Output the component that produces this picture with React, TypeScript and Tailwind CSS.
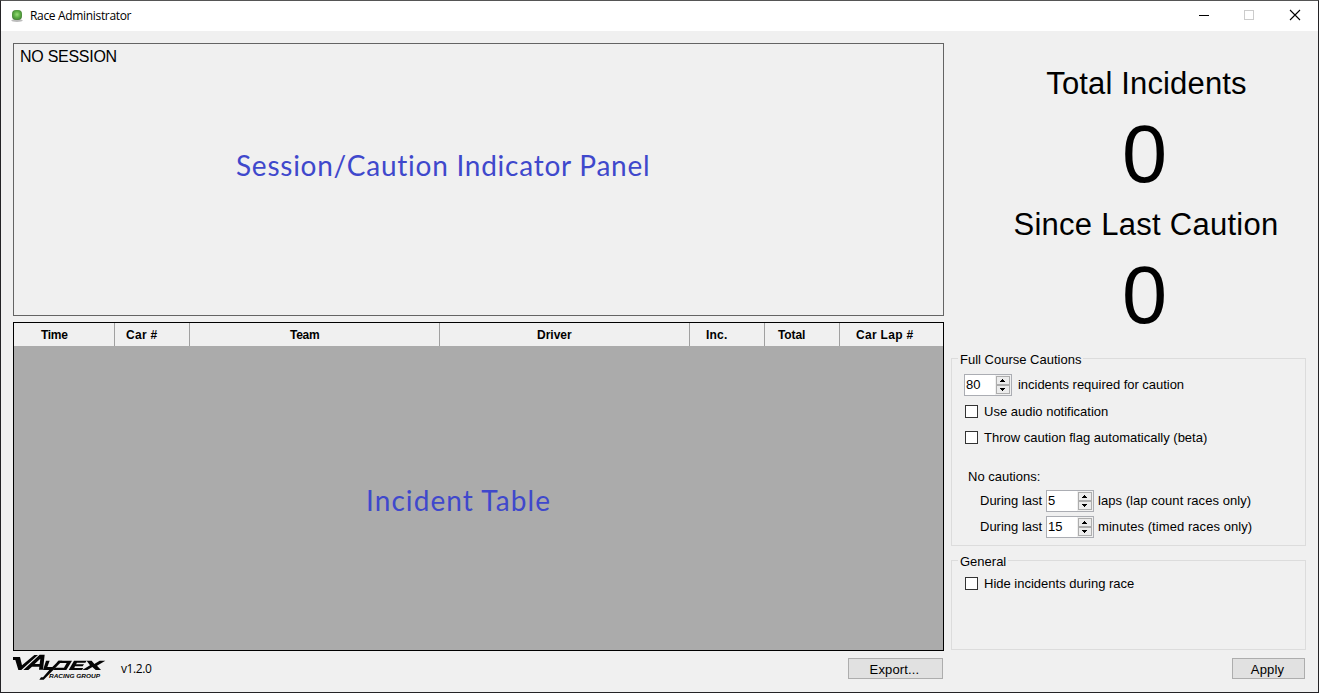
import React from "react";

const columns = [
  { name: "Time", cell: "w-[101px] pl-[27px]", text: "tracking-[-0.3px]" },
  { name: "Car #", cell: "w-[75px] pl-[11px]", text: "tracking-[0.3px]" },
  { name: "Team", cell: "w-[250px] pl-[100px]", text: "tracking-[-0.3px]" },
  { name: "Driver", cell: "w-[250px] pl-[97px]", text: "tracking-[0px]" },
  { name: "Inc.", cell: "w-[75px] pl-[16px]", text: "tracking-[0.2px]" },
  { name: "Total", cell: "w-[75px] pl-[13px]", text: "tracking-[-0.1px]" },
  { name: "Car Lap #", cell: "w-[103px] pl-[16px]", text: "tracking-[0.32px]" },
];

function Spinner({ value }: { value: string }) {
  return (
    <div className="flex h-[22px] w-[48px] shrink-0 border border-[#abadb3] bg-white">
      <span className="w-[30px] pl-[1px] text-[13px] leading-[20px]">{value}</span>
      <svg width="16" height="20" viewBox="0 0 16 20" shapeRendering="crispEdges">
        <path d="M0 0h16v20H0z" fill="#f0f0f0" />
        <path d="M1.500 1.500h13v8h-13zM1.500 10.500h13v8h-13z" fill="#ececec" stroke="#adadad" />
        <path d="M7 4h1v1h1v1h1v1H5V6h1V5h1zM5 13h5v1h-1v1H8v1H7v-1H6v-1H5z" fill="#000" />
      </svg>
    </div>
  );
}

function Check({ label }: { label: string }) {
  return (
    <label className="flex h-[13px] items-center gap-[6px]">
      <span className="size-[13px] border border-[#333] bg-white" />
      <span>{label}</span>
    </label>
  );
}

function Logo() {
  return (
    <svg width="93" height="27" viewBox="9 6 279 81" className="shrink-0">
      <g fill="#050505">
        <path d="M8 15H30L36 40L73 9H84L34 54H25L16 24H8Z" />
        <path fillRule="evenodd" d="M89 8H104L99 53H87L88 44H66L55 54H40ZM91 20L74 36H89Z" />
        <path d="M108 26H119L112 45H127L146 26H157L101 83H88L93 76H99L118 54H99Z" />
        <path d="M145 26H186L169 54H129L135 47H162L170 33H140Z" />
        <path d="M192 26H230L226 32H201L198 37H222L218 43H195L193 48H220L216 54H176Z" />
        <path d="M230 26H245L253 36L269 26H286L261 41L273 54H257L247 45L232 54H217L240 40Z" />
      </g>
      <text x="117" y="79" fontFamily="Liberation Sans" fontSize="17" fontWeight="bold" fontStyle="italic" textLength="153" lengthAdjust="spacingAndGlyphs">RACING GROUP</text>
    </svg>
  );
}

export default function App() {
  return (
    <div className="flex h-[693px] w-[1319px] flex-col overflow-hidden border border-[#242326] border-t-[#555] bg-[#f0f0f0] font-['Liberation_Sans',sans-serif] text-black">
      <header className="flex h-[30px] shrink-0 items-center bg-white pl-[10px]">
        <svg width="12" height="12" viewBox="0 0 12 12">
          <defs>
            <radialGradient id="orb" cx=".5" cy=".45" r=".6">
              <stop offset="0" stopColor="#9adb7a" />
              <stop offset=".5" stopColor="#5cb043" />
              <stop offset="1" stopColor="#457a38" />
            </radialGradient>
          </defs>
          <ellipse cx="6" cy="10.500" rx="5.700" ry="1.500" fill="#bcbcbc" />
          <rect x="1" y="0" width="10" height="10" rx="4" fill="url(#orb)" />
        </svg>
        <h1 className="ml-[7px] w-[200px] font-['Open_Sans',sans-serif] text-[12px] leading-[16px] tracking-[-0.33px]">Race Administrator</h1>
        <svg className="-mr-px ml-auto" width="120" height="30" viewBox="0 0 120 30">
          <path d="M0 14.500h10" stroke="#000" shapeRendering="crispEdges" />
          <path d="M45.500 9.500h9v9h-9z" fill="none" stroke="#ccc" shapeRendering="crispEdges" />
          <path d="M91 9l10 10M101 9L91 19" stroke="#000" strokeWidth="1.100" />
        </svg>
      </header>

      <main className="flex h-[661px] pl-[12px] pt-[12px]">
        <section className="w-[931px] shrink-0">
          <div className="h-[273px] border border-[#646464] pl-[6px] pt-[4px]">
            <p className="text-[16px] leading-[18px] tracking-[-0.27px]">NO SESSION</p>
            <p className="ml-[216px] mt-[81px] whitespace-nowrap font-['Lato',sans-serif] text-[28px] leading-[36px] tracking-[0.75px] text-[#3f48cc]">Session/Caution Indicator Panel</p>
          </div>
          <div className="mt-[6px] h-[329px] border border-black bg-[#ababab]">
            <div className="flex h-[23px] bg-[#f0f0f0]">
              {columns.map((c) => (
                <div key={c.name} className={`${c.cell} border-r border-[#a0a0a0] last:border-r-0`}>
                  <span className={`${c.text} block whitespace-nowrap text-[12px] font-bold leading-[24px]`}>{c.name}</span>
                </div>
              ))}
            </div>
            <p className="ml-[352px] mt-[136px] whitespace-nowrap font-['Lato',sans-serif] text-[28px] leading-[36px] tracking-[1.08px] text-[#3f48cc]">Incident Table</p>
          </div>
          <footer className="flex pt-[3px]">
            <Logo />
            <span className="ml-[15px] mt-[7px] font-['Open_Sans',sans-serif] text-[12px] leading-[16px] tracking-[-0.4px]">v1.2.0</span>
            <button className="ml-auto mr-px mt-[4px] h-[21px] w-[95px] border border-[#adadad] bg-[#e1e1e1] pr-[2px] text-[13px] leading-[21px] tracking-[0.15px]">Export...</button>
          </footer>
        </section>

        <aside className="ml-[7px] w-[355px] shrink-0 text-[13px] leading-[14px]">
          <div className="flex h-[315px] flex-col items-center pl-[36px] pt-[21px]">
            <h2 className="flex h-[40px] items-center whitespace-nowrap text-[31px] tracking-[0.15px]">Total Incidents</h2>
            <div className="flex h-[101px] items-center pb-[2px] pr-[4px] text-[81px]">0</div>
            <h2 className="flex h-[40px] items-center whitespace-nowrap pr-[1px] text-[31px] tracking-[0.27px]">Since Last Caution</h2>
            <div className="flex h-[101px] items-center pb-[2px] pr-[4px] text-[81px]">0</div>
          </div>
          <fieldset className="relative h-[188px] border border-[#dcdcdc] pl-[12px]">
            <h3 className="absolute -top-[6px] left-[6px] bg-[#f0f0f0] px-[2px]">Full Course Cautions</h3>
            <div className="mt-[15px] flex items-center gap-[6px]">
              <Spinner value="80" />
              <span className="-mt-px tracking-[-0.03px]">incidents required for caution</span>
            </div>
            <div className="mt-[9px] pl-px"><Check label="Use audio notification" /></div>
            <div className="mt-[13px] pl-px"><Check label="Throw caution flag automatically (beta)" /></div>
            <p className="mt-[26px] pl-[4px]">No cautions:</p>
            <div className="mt-[6px] flex items-center pl-[16px]">
              <span className="-mt-px w-[66px]">During last</span>
              <Spinner value="5" />
              <span className="-mt-px ml-[4px] tracking-[0.05px]">laps (lap count races only)</span>
            </div>
            <div className="mt-[4px] flex items-center pl-[16px]">
              <span className="-mt-px w-[66px]">During last</span>
              <Spinner value="15" />
              <span className="-mt-px ml-[4px] tracking-[0.07px]">minutes (timed races only)</span>
            </div>
          </fieldset>
          <fieldset className="relative mt-[14px] h-[90px] border border-[#dcdcdc] pl-[13px] pt-[16px]">
            <h3 className="absolute -top-[6px] left-[6px] bg-[#f0f0f0] px-[2px]">General</h3>
            <Check label="Hide incidents during race" />
          </fieldset>
          <div className="flex justify-end pr-px pt-[8px]">
            <button className="h-[21px] w-[73px] border border-[#adadad] bg-[#e1e1e1] pr-[2px] text-[13px] leading-[21px] tracking-[0.15px]">Apply</button>
          </div>
        </aside>
      </main>
    </div>
  );
}
